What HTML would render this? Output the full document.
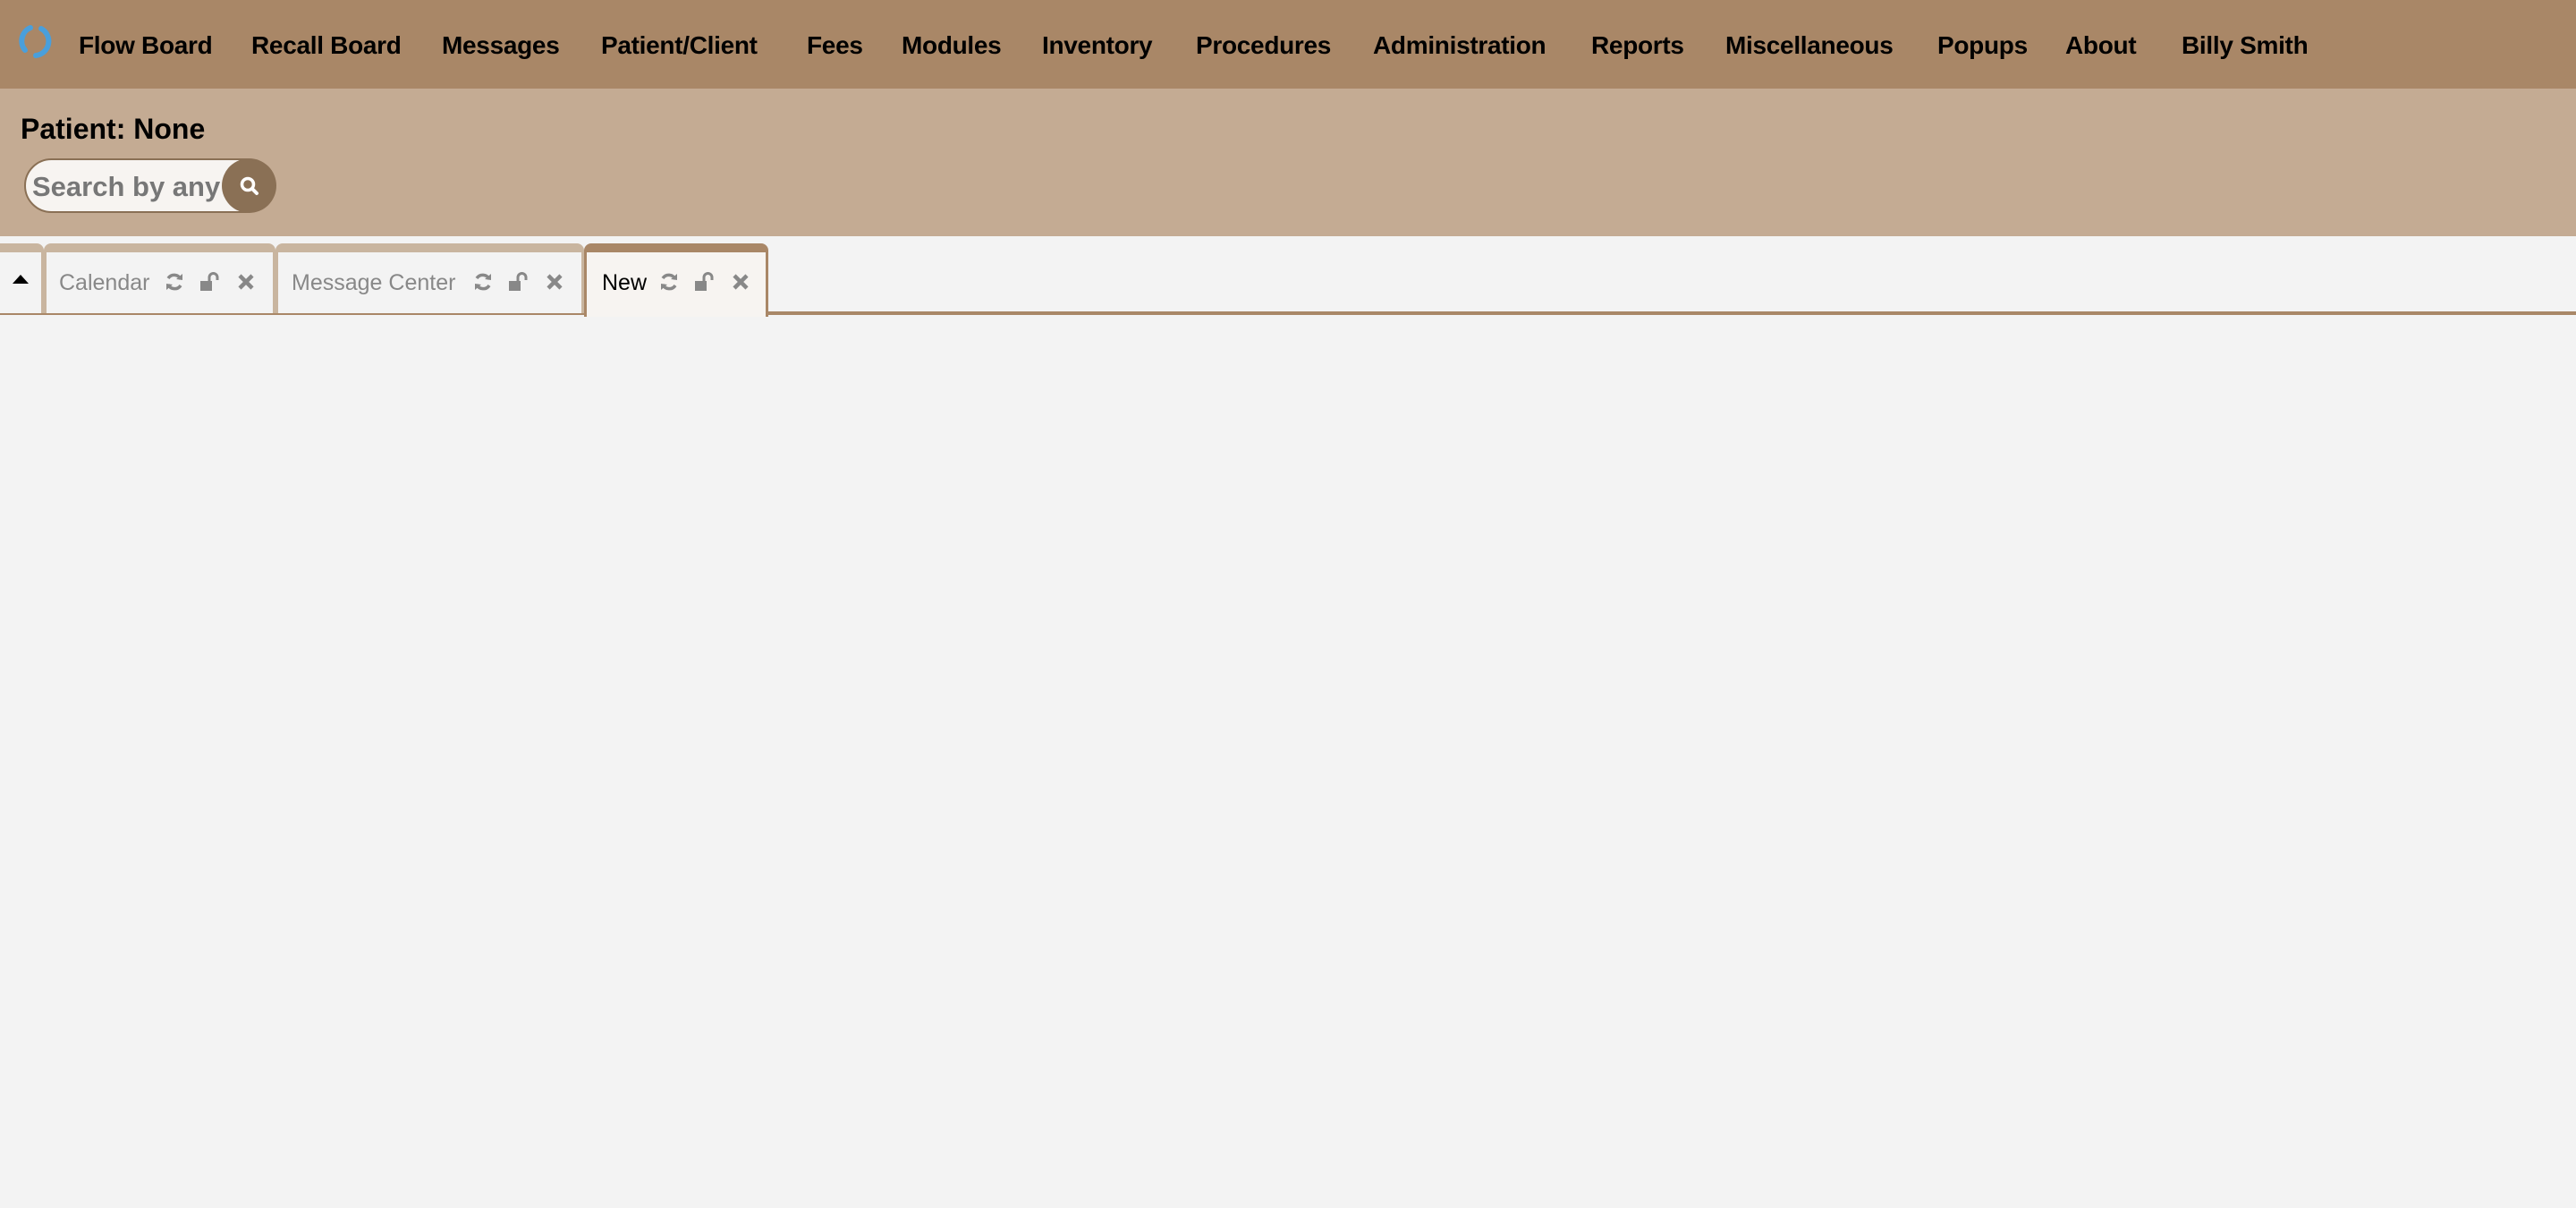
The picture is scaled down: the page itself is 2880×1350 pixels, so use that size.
<!DOCTYPE html>
<html><head><meta charset="utf-8"><style>
*{margin:0;padding:0;box-sizing:border-box}
body{width:2880px;height:1350px;background:#f3f3f3;font-family:"Liberation Sans",sans-serif;position:relative;overflow:hidden}
#hdr{position:absolute;left:0;top:0;width:2880px;height:99px;background:#a98767}
.n{position:absolute;top:35px;font-weight:bold;font-size:28px;color:#000;white-space:nowrap;letter-spacing:-0.3px}
#pat{position:absolute;left:0;top:99px;width:2880px;height:165px;background:#c4ab93}
#pt{position:absolute;left:23px;top:27px;font-size:32px;font-weight:bold;color:#000}
#srch{position:absolute;left:27px;top:78px;width:278px;height:61px;border:2px solid #8a7055;border-radius:31px;background:#f7f4f1;overflow:hidden}
#srch span{position:absolute;left:7px;top:12px;font-size:31px;font-weight:bold;color:#777;white-space:nowrap}
#btn{position:absolute;left:248px;top:78px;width:61px;height:61px;border-radius:50%;background:#8a7055}
#line{position:absolute;left:0;top:348px;width:2880px;height:4px;background:#a98767}
.tab{position:absolute;top:272px;height:78px;border-top:10px solid #c9b59f;border-left:3px solid #c9b59f;border-right:3px solid #c9b59f;border-radius:8px 8px 0 0;background:#f3f3f3}
.tab .t{position:absolute;top:20px;font-size:25px;color:#888;white-space:nowrap}
.ic{position:absolute;top:22px}
</style></head><body>
<div id="hdr">
<svg style="position:absolute;left:20px;top:26px" width="40" height="40" viewBox="0 0 40 40"><path d="M14 5 A16 16 0 0 0 8 30" stroke="#4a9fdb" stroke-width="6" fill="none" stroke-linecap="round"/><path d="M26 6 A16 16 0 0 1 20 36" stroke="#4a9fdb" stroke-width="6" fill="none" stroke-linecap="round"/></svg>
<div class="n" style="left:88px">Flow Board</div>
<div class="n" style="left:281px">Recall Board</div>
<div class="n" style="left:494px">Messages</div>
<div class="n" style="left:672px">Patient/Client</div>
<div class="n" style="left:902px">Fees</div>
<div class="n" style="left:1008px">Modules</div>
<div class="n" style="left:1165px">Inventory</div>
<div class="n" style="left:1337px">Procedures</div>
<div class="n" style="left:1535px">Administration</div>
<div class="n" style="left:1779px">Reports</div>
<div class="n" style="left:1929px">Miscellaneous</div>
<div class="n" style="left:2166px">Popups</div>
<div class="n" style="left:2309px">About</div>
<div class="n" style="left:2439px">Billy Smith</div>
</div>
<div id="pat">
<div id="pt">Patient: None</div>
<div id="srch"><span>Search by any</span></div>
<div id="btn"><svg style="position:absolute;left:18px;top:18px" width="26" height="26" viewBox="0 0 26 26"><circle cx="11" cy="11" r="6.5" stroke="#fff" stroke-width="3.5" fill="none"/><path d="M16 16 L21 21" stroke="#fff" stroke-width="4" stroke-linecap="round"/></svg></div>
</div>
<div id="line"></div>
<div class="tab" style="left:0;width:49px;border-left:none;border-radius:0 8px 0 0"><svg style="position:absolute;left:14px;top:24px" width="18" height="12"><path d="M0 11 L9 1 L18 11Z" fill="#000"/></svg></div>
<div class="tab" style="left:49px;width:259px"><span class="t" style="left:14px">Calendar</span>
<svg class="ic" style="left:132px" width="22" height="22" viewBox="0 0 22 22"><path d="M18 8 A8 8 0 0 0 4 7 M4 14 A8 8 0 0 0 18 15" stroke="#888" stroke-width="3.5" fill="none"/><path d="M13 8 L20 9 L20 2Z M9 14 L2 13 L2 20Z" fill="#888"/></svg>
<svg class="ic" style="left:171px" width="22" height="22" viewBox="0 0 22 22"><rect x="1" y="10" width="13" height="11" fill="#888"/><path d="M11 10 V6 A4.5 4.5 0 0 1 20 6 V9" stroke="#888" stroke-width="3" fill="none"/></svg>
<svg class="ic" style="left:213px" width="20" height="22" viewBox="0 0 20 22"><path d="M3 4 L17 18 M17 4 L3 18" stroke="#888" stroke-width="4.5"/></svg></div>
<div class="tab" style="left:308px;width:345px"><span class="t" style="left:15px">Message Center</span>
<svg class="ic" style="left:218px" width="22" height="22" viewBox="0 0 22 22"><path d="M18 8 A8 8 0 0 0 4 7 M4 14 A8 8 0 0 0 18 15" stroke="#888" stroke-width="3.5" fill="none"/><path d="M13 8 L20 9 L20 2Z M9 14 L2 13 L2 20Z" fill="#888"/></svg>
<svg class="ic" style="left:257px" width="22" height="22" viewBox="0 0 22 22"><rect x="1" y="10" width="13" height="11" fill="#888"/><path d="M11 10 V6 A4.5 4.5 0 0 1 20 6 V9" stroke="#888" stroke-width="3" fill="none"/></svg>
<svg class="ic" style="left:299px" width="20" height="22" viewBox="0 0 20 22"><path d="M3 4 L17 18 M17 4 L3 18" stroke="#888" stroke-width="4.5"/></svg></div>
<div class="tab" style="left:653px;width:206px;height:82px;border-color:#a98767;background:#f7f4f1"><span class="t" style="left:17px;color:#000">New</span>
<svg class="ic" style="left:81px" width="22" height="22" viewBox="0 0 22 22"><path d="M18 8 A8 8 0 0 0 4 7 M4 14 A8 8 0 0 0 18 15" stroke="#888" stroke-width="3.5" fill="none"/><path d="M13 8 L20 9 L20 2Z M9 14 L2 13 L2 20Z" fill="#888"/></svg>
<svg class="ic" style="left:120px" width="22" height="22" viewBox="0 0 22 22"><rect x="1" y="10" width="13" height="11" fill="#888"/><path d="M11 10 V6 A4.5 4.5 0 0 1 20 6 V9" stroke="#888" stroke-width="3" fill="none"/></svg>
<svg class="ic" style="left:162px" width="20" height="22" viewBox="0 0 20 22"><path d="M3 4 L17 18 M17 4 L3 18" stroke="#888" stroke-width="4.5"/></svg></div>
</body></html>
